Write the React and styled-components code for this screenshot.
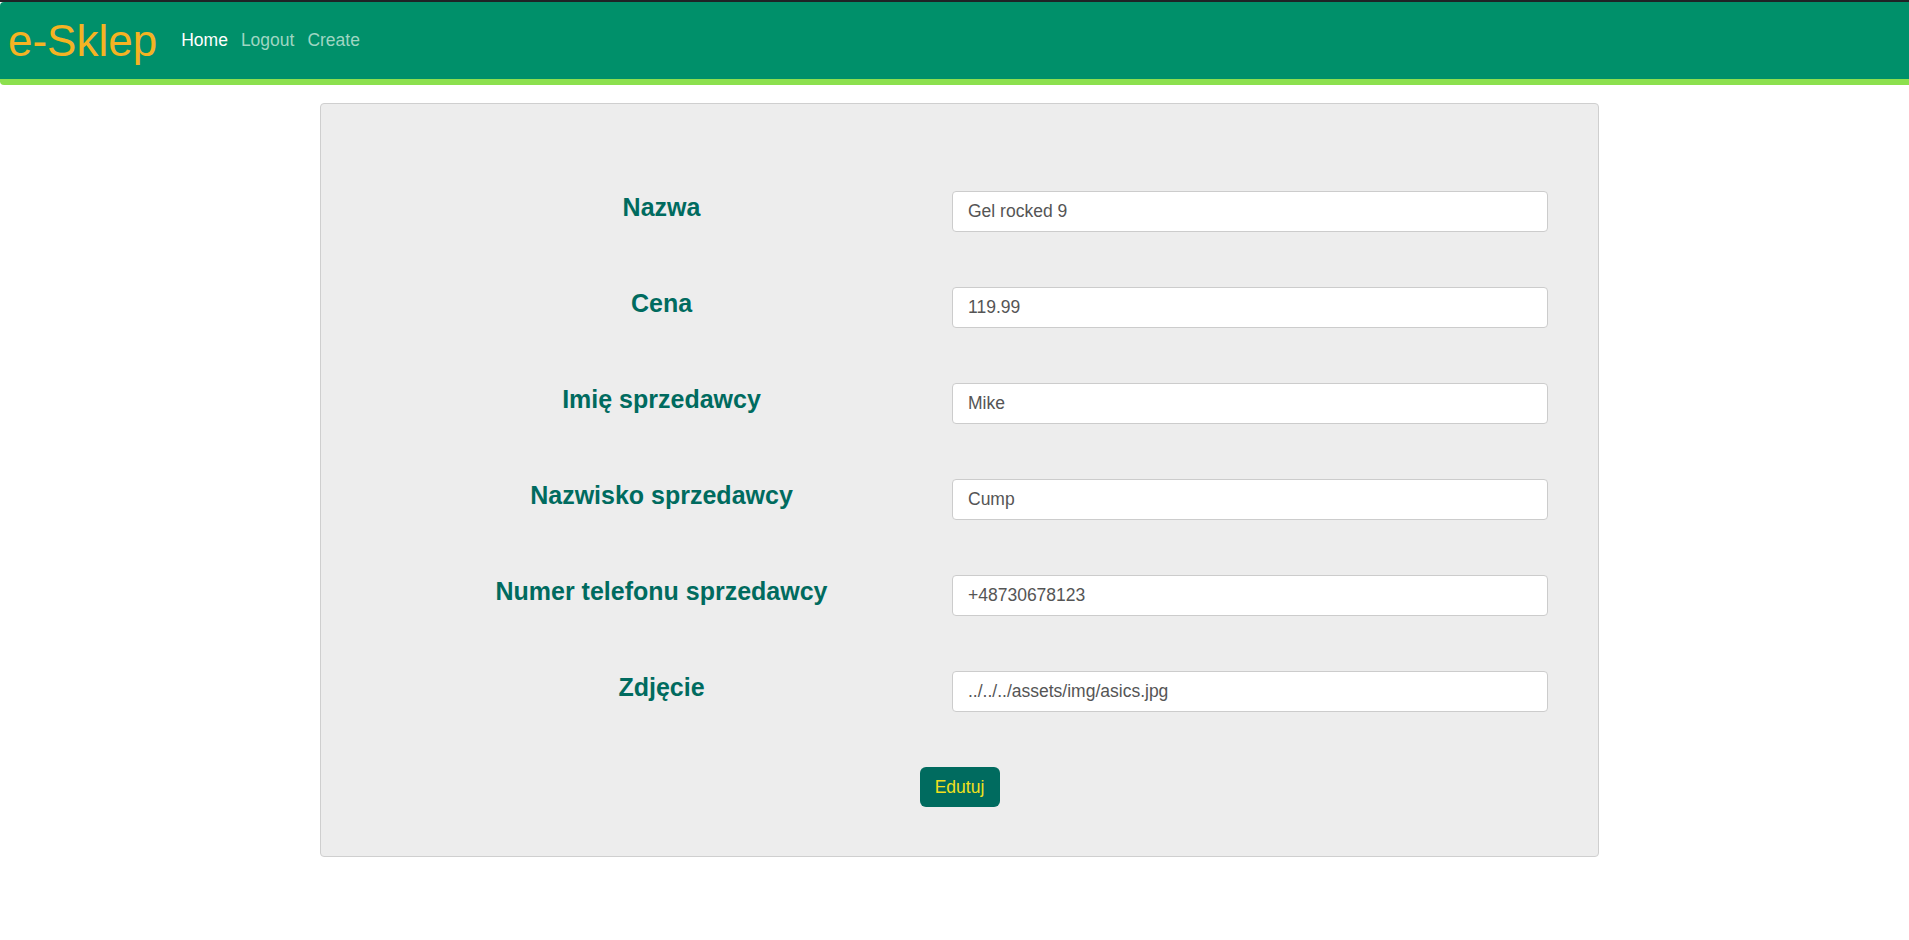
import styled, { createGlobalStyle } from "styled-components";

const GlobalStyle = createGlobalStyle`
  * { box-sizing: border-box; }
  body {
    margin: 0;
    font-family: "Liberation Sans", Arial, sans-serif;
    background: #fff;
    overflow-x: hidden;
  }
`;

/* top bar */

const TopStrip = styled.div`
  height: 2px;
  background: #1f2326;
`;

const Navbar = styled.nav`
  display: flex;
  align-items: center;
  height: 83px;
  padding-left: 8px;
  background: #00906a;
  border-bottom: 6px solid #8ce04e;
  border-radius: 4px 0 0 4px;
`;

const Brand = styled.a`
  font-size: 44px;
  line-height: 1;
  color: #f5b323;
  text-decoration: none;
`;

const NavLinks = styled.ul`
  display: flex;
  gap: 13px;
  margin: 0 0 0 24px;
  padding: 0;
  list-style: none;
`;

const NavLink = styled.li`
  font-size: 17.5px;
  line-height: 1;
  color: ${(p) => (p.$active ? "#ffffff" : "#9fd6c2")};
  cursor: pointer;
`;

/* form card */

const Card = styled.form`
  width: 1279px;
  margin: 18px 0 0 320px;
  padding: 87px 50px 49px;
  background: #ededed;
  border: 1px solid #cfcfcf;
  border-radius: 4px;
  display: flex;
  flex-direction: column;
  gap: 55px;
`;

const Row = styled.div`
  display: grid;
  grid-template-columns: 1fr 596px;
  align-items: center;
`;

const Label = styled.label`
  text-align: center;
  font-size: 25px;
  font-weight: bold;
  color: #006b5f;
  margin-bottom: 8px;
`;

const Input = styled.input`
  height: 41px;
  width: 100%;
  padding: 0 15px;
  font-family: "Liberation Sans", Arial, sans-serif;
  font-size: 17.5px;
  color: #555;
  background: #fff;
  border: 1px solid #cccccc;
  border-radius: 4px;
  outline: none;
`;

const Submit = styled.button`
  align-self: center;
  width: 80px;
  height: 40px;
  font-family: "Liberation Sans", Arial, sans-serif;
  font-size: 17.5px;
  color: #f2e01c;
  background: #006b5f;
  border: none;
  border-radius: 6px;
  cursor: pointer;
`;

const fields = [
  ["Nazwa", "Gel rocked 9"],
  ["Cena", "119.99"],
  ["Imię sprzedawcy", "Mike"],
  ["Nazwisko sprzedawcy", "Cump"],
  ["Numer telefonu sprzedawcy", "+48730678123"],
  ["Zdjęcie", "../../../assets/img/asics.jpg"],
];

export default function App() {
  return (
    <>
      <GlobalStyle />
      <TopStrip />
      <Navbar>
        <Brand href="#">e-Sklep</Brand>
        <NavLinks>
          <NavLink $active>Home</NavLink>
          <NavLink>Logout</NavLink>
          <NavLink>Create</NavLink>
        </NavLinks>
      </Navbar>
      <Card onSubmit={(e) => e.preventDefault()}>
        {fields.map(([label, value]) => (
          <Row key={label}>
            <Label>{label}</Label>
            <Input defaultValue={value} />
          </Row>
        ))}
        <Submit type="submit">Edutuj</Submit>
      </Card>
    </>
  );
}
